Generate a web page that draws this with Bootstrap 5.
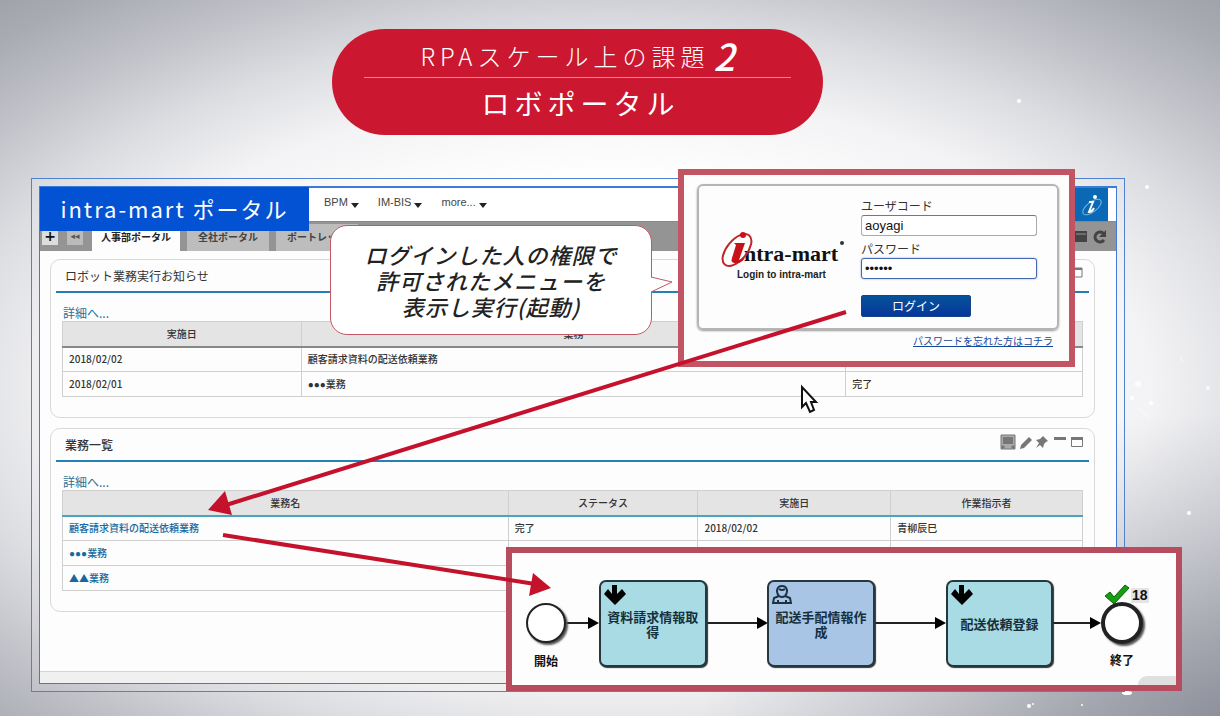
<!DOCTYPE html>
<html lang="ja">
<head>
<meta charset="utf-8">
<meta name="viewport" content="width=device-width, initial-scale=1">
<title>ロボポータル</title>
<link href="https://cdn.jsdelivr.net/npm/bootstrap@5.3.0/dist/css/bootstrap.min.css" rel="stylesheet">
<style>
body{font-family:"Noto Sans CJK JP",sans-serif;font-size:10px;line-height:16px;color:#333;min-height:100vh;
background:radial-gradient(ellipse at 100% 100%,rgba(110,114,128,.5) 0,rgba(110,114,128,0) 30%),radial-gradient(ellipse 82% 76% at 50% 54%,#fff 38%,#f3f3f5 54%,#dcdde1 66%,#c4c5cb 76%,#a9abb3 88%,#989aa4 100%) no-repeat}
.stage{min-height:100vh;padding:29px 95px 25px 31px}
.topic{width:491px;height:106px;margin:0 0 43px 301px;border-radius:53px;background:#cb172f;color:#fff;padding:10px 32px}
.topic .first{font-size:24px;font-weight:300;letter-spacing:5px;line-height:34px;border-bottom:1px solid #e58a95;height:39px}
.topic .num{font-size:37px;line-height:32px;font-weight:500;font-style:italic;letter-spacing:0;margin-left:4px}
.topic .second{font-size:28px;letter-spacing:5px;line-height:50px;padding-left:6px}
.frame{border:1px solid #4f83d2;padding:7px;background:rgba(255,255,255,.1)}
.portal{border:1px solid #3f7ad8;border-top-width:2px;background:#fdfdfd}
.brand{left:0;top:-1px;width:269px;height:44px;background:#0452d4;color:#fff;font-size:22px;letter-spacing:2px;line-height:42px;z-index:2}
.menubar{height:33px;padding-left:284px;gap:19px;font:11px/16px "Liberation Sans",sans-serif;padding-top:6px;background:#fff}
.menubar a{color:#444;text-decoration:none}
.caret{display:inline-block;border:4px solid transparent;border-top:5px solid #222;border-bottom:0;margin-left:3px;vertical-align:-2px}
.mark-i{width:33px;height:33px;margin-top:-6px;margin-right:8px;background:#0a68b5}
.tabs{height:30px;background:#949494;padding:2px 8px 0 2px;border-top:1px solid #888}
.tabs .ctl{width:16px;height:18px;margin:3px 9px 0 0;border:0;padding:0;background:#ddd;color:#111;font:bold 14px/18px "DejaVu Sans",sans-serif}
.tabs .ctl.dim{background:#bbb;color:#555;font-size:9px}
.tab-p{height:27px;background:#bdbdbd;color:#444;font-weight:700;text-decoration:none;padding:5px 11px 0;margin-right:7px;white-space:nowrap}
.tab-p.on{background:#fdfdfd;color:#222;padding:5px 9px 0}
.portlet{border:1px solid #d9d9d9;border-radius:10px;margin:0 21px 10px 10px;padding:0 5px;background:#fdfdfd}
.portlet h2{font-size:12px;font-weight:400;line-height:34px;height:33px;margin:0;padding:0 5px 0 9px;border-bottom:2px solid #2580b5}
.portlet h2 svg{margin-bottom:6px}
.portlet.b h2{font-weight:500}
.more{font-size:12px;line-height:16px;color:#2a7099;text-decoration:none;padding-left:1px}
.portlet .inner{padding:12px 6px 20px}
.grid-t{table-layout:fixed;width:100%;border-collapse:collapse;font-weight:500}
.grid-t th,.grid-t td{border:1px solid #cfcfcf;height:25px;padding:0 6px;white-space:nowrap;line-height:16px}
.grid-t th{background:#e4e4e4;text-align:center;font-weight:500;border-bottom:2px solid #888}
.b .grid-t th{border-bottom-color:#4aa3bd}
.grid-t a{color:#1568a0;text-decoration:none}
.dots{font-family:"Liberation Sans",sans-serif}
.status-bar{height:12px;border-top:1px solid #d5d5d5;background:#f0f0f0;margin-top:59px}
.balloon{left:330px;top:225px;width:322px;height:110px;border:1px solid #c25767;border-radius:17px;background:#fff;color:#222;font-size:22px;font-weight:500;font-style:italic;letter-spacing:1px;line-height:26px;padding-top:15px}
.balloon svg{left:320px;top:49px}
.login{left:678px;top:169px;width:397px;height:198px;border:6px solid #c35464;background:#fdfdfd;padding:9px 10px 0 13px}
.login .box{height:146px;border:2px solid #b5b5b5;border-radius:6px;box-shadow:0 1px 2px #999;padding:11px 20px 0 21px}
.login .logo{margin-top:26px}
.login form{width:176px}
.login label{font-size:12px;line-height:18px;display:block}
.login input{width:100%;height:21px;border:1px solid #aaa;border-top-color:#777;border-radius:3px;padding:0 3px;font:13px "Liberation Sans",sans-serif;color:#111;display:block}
.login input.focused{border-color:#4468b0;box-shadow:0 0 2px #7fa2e8;margin-bottom:16px}
.login button{width:110px;height:22px;border:1px solid #174489;border-radius:2px;background:linear-gradient(#07529a,#06369b);color:#fff;font-size:12px;line-height:18px;padding:0}
.login .forgot{color:#14489c;line-height:22px;margin-right:6px}
.flow{left:506px;top:547px;width:676px;height:144px;border:6px solid #b64c5d;background:#fdfdfd;padding:8px 33px 0 14px;color:#111;font-size:13px;line-height:15px;font-weight:700}
.task{width:108px;height:87px;border:2px solid #26383e;border-radius:7px;background:#a9dbe4;box-shadow:1px 1px 1px #333;color:#15303c;padding:27px 5px 0}
.task.user{background:#a9c5e6}
.task svg{left:3px;top:2px}
.evt{width:40px;height:40px;border:2px solid #222;border-radius:50%;background:#fff;box-shadow:2px 2px 2px #555;flex:none}
.evt.end{border-width:4px;width:42px;height:42px}
.evt-name{white-space:nowrap;font-size:12px}
.visits{font-family:"Liberation Sans",sans-serif;font-size:14px}
.visits b{background:#e4e4e4;padding:0 1px}
.cornr{right:0;bottom:0;width:38px;height:9px;background:#e0e0e0;border-radius:10px 0 0 0}
</style>
</head>
<body>
<main class="stage position-relative overflow-hidden">
  <svg class="position-absolute top-0 start-0" width="1220" height="716" fill="#fff" aria-hidden="true">
    <circle cx="1019" cy="101" r="2"/><circle cx="1147" cy="187" r="2"/><circle cx="1138" cy="384" r="3" opacity=".8"/><circle cx="1132" cy="398" r="2"/><circle cx="1151" cy="403" r="2"/><circle cx="1208" cy="388" r="2" opacity=".7"/><circle cx="1189" cy="513" r="2"/><circle cx="1082" cy="705" r="1"/><circle cx="1029" cy="706" r="2"/><circle cx="1033" cy="704" r="1"/><ellipse cx="1127" cy="693" rx="5" ry="2"/>
    <path d="M1137 407l13 11M1180 356l3 6" stroke="#fff" opacity=".7"/>
  </svg>

  <header class="topic text-center position-relative">
    <div class="first text-nowrap d-flex justify-content-center"><span>RPAスケール上の課題</span><span class="num">2</span></div>
    <div class="second">ロボポータル</div>
  </header>

  <section class="frame position-relative">
    <div class="portal position-relative">
      <div class="brand position-absolute text-center">intra-mart ポータル</div>
      <nav class="menubar d-flex">
        <a href="#">BPM<span class="caret"></span></a><a href="#">IM-BIS<span class="caret"></span></a><a href="#">more...<span class="caret"></span></a>
        <span class="mark-i ms-auto"><svg width="33" height="33" fill="none" stroke="#fff"><ellipse cx="17" cy="19" rx="11" ry="5" stroke="#6fb7df" transform="rotate(-38 17 19)"/><path d="M14 14h4l-4 10q3 0 5-4" stroke-width="2"/><circle cx="20" cy="9" r="2" fill="#fff" stroke="none"/></svg></span>
      </nav>
      <nav class="tabs d-flex">
        <button class="ctl" type="button" aria-label="追加">+</button><button class="ctl dim" type="button" aria-label="前へ">◂◂</button>
        <a class="tab-p on" href="#">人事部ポータル</a><a class="tab-p" href="#">全社ポータル</a><a class="tab-p" href="#">ポートレット</a>
        <svg class="ms-auto mt-1" width="34" height="20"><path d="M1 3h12v11H1z" fill="#444"/><path d="M2 6h10" stroke="#999"/><path d="M30 6a5 5 0 1 0 0 6" fill="none" stroke="#444" stroke-width="3"/><path d="M32 2v7h-7z" fill="#444"/></svg>
      </nav>
      <div class="pt-2"></div>
      <section class="portlet mt-0">
        <h2 class="d-flex justify-content-between align-items-center"><span>ロボット業務実行お知らせ</span><svg width="14" height="12" fill="none" stroke="#777"><path d="M1 1h11v9H1z"/><path d="M1 2h11" stroke-width="2"/></svg></h2>
        <div class="inner">
          <a class="more d-block" href="#">詳細へ...</a>
          <table class="grid-t">
            <colgroup><col style="width:23.4%"><col style="width:53.4%"><col style="width:23.2%"></colgroup>
            <thead><tr><th>実施日</th><th>業務</th><th></th></tr></thead>
            <tbody><tr><td>2018/02/02</td><td>顧客請求資料の配送依頼業務</td><td></td></tr>
            <tr><td>2018/02/01</td><td><span class="dots">●●●</span>業務</td><td>完了</td></tr></tbody>
          </table>
        </div>
      </section>
      <section class="portlet b">
        <h2 class="d-flex justify-content-between align-items-center"><span>業務一覧</span>
          <svg width="84" height="16" viewBox="0 0 84 16" fill="#777"><path d="M1 1h14v14H1z" fill="#aaa"/><path d="M3 3h10v7H3zM1 13l2-2 2 2-2 2zM15 13l-2-2-2 2 2 2z"/><path d="M1 1h14v14H1z" fill="none" stroke="#777"/><path d="M20 15l1-4 8-8 3 3-8 8z"/><path d="M43 2l5 5-2 1-2 2-1 4-3-3-4 3 3-5-3-3 4-1 2-2z"/><path d="M54 3h12v3H54z"/><path d="M71 3h12v3H71z"/><path d="M71.500 4.500h11v8h-11z" fill="none" stroke="#777"/></svg></h2>
        <div class="inner">
          <a class="more d-block" href="#">詳細へ...</a>
          <table class="grid-t">
            <colgroup><col style="width:43.7%"><col style="width:18.6%"><col style="width:18.9%"><col style="width:18.8%"></colgroup>
            <thead><tr><th>業務名</th><th>ステータス</th><th>実施日</th><th>作業指示者</th></tr></thead>
            <tbody><tr><td><a href="#">顧客請求資料の配送依頼業務</a></td><td>完了</td><td>2018/02/02</td><td>青柳辰巳</td></tr>
            <tr><td><a href="#"><span class="dots">●●●</span>業務</a></td><td></td><td></td><td></td></tr>
            <tr><td><a href="#">▲▲業務</a></td><td></td><td></td><td></td></tr></tbody>
          </table>
        </div>
      </section>
      <div class="status-bar"></div>
    </div>
  </section>

  <aside class="balloon position-absolute text-center">ログインした人の権限で<br>許可されたメニューを<br>表示し実行(起動)
    <svg class="position-absolute" width="24" height="20" fill="#fff" stroke="#c25767"><path d="M0 2l21 5L0 17"/><path d="M0 3v13" stroke="#fff" stroke-width="2"/></svg>
  </aside>

  <section class="login position-absolute">
    <div class="box d-flex justify-content-between align-items-start">
      <svg class="logo" width="130" height="60" viewBox="0 0 130 60">
        <text x="24" y="38" font-family="Liberation Serif" font-size="22" font-weight="700" fill="#111">ntra-mart</text>
        <circle cx="122" cy="20" r="2" fill="#333"/>
        <ellipse cx="17" cy="27" rx="19" ry="10" transform="rotate(-50 17 27)" fill="none" stroke="#c0272d" stroke-width="2"/>
        <path d="M14 20h11l-6 17q3 0 6-3-2 6-9 6-6 0-4-5l4-13z" fill="#c9101a"/><circle cx="23" cy="12" r="3" fill="#c9101a"/>
        <text x="17" y="55" font-family="Liberation Sans" font-size="10" font-weight="700" fill="#222">Login to intra-mart</text>
      </svg>
      <form>
        <label for="user">ユーザコード</label><input id="user" type="text" value="aoyagi">
        <label for="pass" class="mt-1">パスワード</label><input id="pass" class="focused" type="password" value="aoyagi">
        <button type="button">ログイン</button>
      </form>
    </div>
    <div class="text-end"><a class="forgot" href="#">パスワードを忘れた方はコチラ</a></div>
  </section>

  <section class="flow position-absolute">
    <div class="d-flex align-items-center position-relative h-100">
      <div class="evt position-relative"><span class="evt-name position-absolute top-100 start-50 translate-middle-x mt-2 pt-1">開始</span></div>
      <svg width="33" height="12"><path d="M0 6h24" stroke="#222" stroke-width="2"/><path d="M22 0l11 6-11 6z"/></svg>
      <div class="task position-relative text-center"><svg class="position-absolute" width="24" height="22"><path d="M8 1h5v9l5-5 4 5-11 11L0 10l4-5 4 5z"/></svg>資料請求情報取得</div>
      <svg class="flex-grow-1" width="61" height="12"><path d="M0 6h52" stroke="#222" stroke-width="2"/><path d="M50 0l11 6-11 6z"/></svg>
      <div class="task user position-relative text-center"><svg class="position-absolute" width="20" height="22" fill="none" stroke="#1d3142" stroke-width="2"><path d="M7 12c-3-3-3-10 3-10s6 7 3 10M7 12l-5 2-1 5h18l-1-5-5-2M7 12q3 2 6 0M6 16v3M14 16v3M7 5q3 2 6 0"/></svg>配送手配情報作成</div>
      <svg width="71" height="12"><path d="M0 6h62" stroke="#222" stroke-width="2"/><path d="M60 0l11 6-11 6z"/></svg>
      <div class="task position-relative d-flex align-items-center justify-content-center p-0"><svg class="position-absolute" width="24" height="22"><path d="M8 1h5v9l5-5 4 5-11 11L0 10l4-5 4 5z"/></svg>配送依頼登録</div>
      <svg width="48" height="12"><path d="M0 6h40" stroke="#222" stroke-width="2"/><path d="M37 0l11 6-11 6z"/></svg>
      <div class="evt end position-relative"><span class="evt-name position-absolute top-100 start-50 translate-middle-x mt-2 pt-1">終了</span>
        <span class="visits position-absolute bottom-100 start-0 d-flex align-items-center"><svg width="26" height="22" class="flex-shrink-0"><path d="M0 12l5-4 4 5L20 1l4 3L9 20z" fill="#15a010" stroke="#0b5c0b"/></svg><b>18</b></span></div>
    </div>
    <div class="cornr position-absolute"></div>
  </section>

  <svg class="position-absolute top-0 start-0 pe-none" width="1220" height="716" fill="#c4122c">
    <path d="M846 312L226 505M223 535l312 49" stroke="#c4122c" stroke-width="4"/>
    <path d="M208 510l17-19 7 24zM551 588l-18-15-4 23z"/>
    <path d="M802 387v20l4-4 4 9 4-2-3-8h5z" fill="#fff" stroke="#111" stroke-width="2"/>
  </svg>
</main>
<script src="https://cdn.jsdelivr.net/npm/bootstrap@5.3.0/dist/js/bootstrap.bundle.min.js"></script>
</body>
</html>
